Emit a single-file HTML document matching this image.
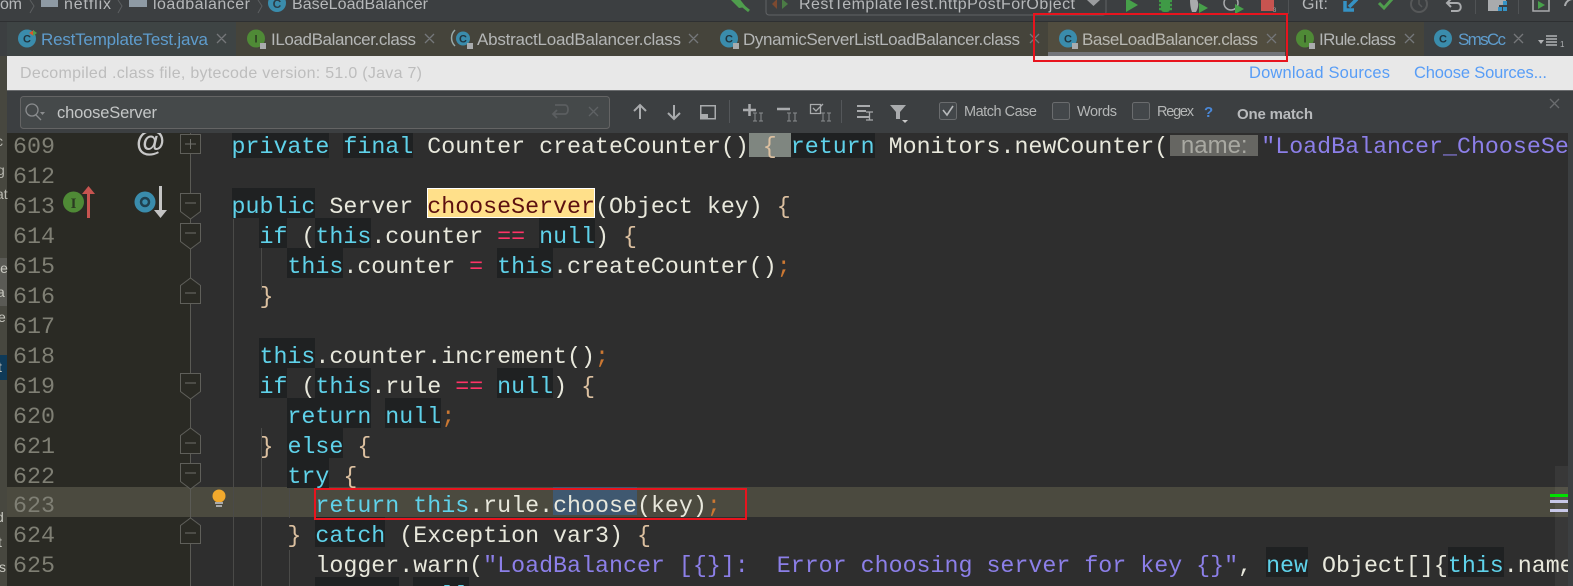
<!DOCTYPE html>
<html><head><meta charset="utf-8">
<style>
html,body{margin:0;padding:0;background:#3c3f41;width:1573px;height:586px;overflow:hidden}
#ed{position:absolute;left:0;top:133px;width:1568px;height:453px;overflow:hidden;background:#2e2e2e}
#gut{position:absolute;left:7px;top:0;width:183px;height:453px;background:#2a2a24}
.hl{position:absolute;left:7px;width:1561px;top:354px;height:30px;background:#4b4a3f}
.r{position:absolute;left:0;height:30px;white-space:pre;font:23.3px/38px "Liberation Mono",monospace;color:#e8e8dc}
.c{left:231.500px}
.n{left:13px;color:#7f7f74}
.k{color:#5fd2ea;background:#1f2122;display:inline-block;height:30px}
.p{color:#5fd2ea}
.o{color:#dcc0a0}
.s{color:#cc7832}
.e{color:#ff3366}
.t{color:#8c7fe8}
.f{background:#7f8680;color:#b9ad92;display:inline-block;height:29px}
.h{display:inline-block;width:88px;height:21px;margin:7px 3px 0 2px;vertical-align:top;background:#666662;color:#a9a9a2;font:24px/21px "Liberation Sans",sans-serif;text-align:center}
.m{background:#ffe08a;color:#5c1010;outline:1px solid #fff;outline-offset:-1px;display:inline-block;height:30px}
.u{background:#3f5870;display:inline-block;height:28px}
svg{position:absolute;left:0;top:0}
</style></head><body>
<div style="position:absolute;left:7px;top:22px;width:1566px;height:34px;background:#45443b"></div>
<div id="ed">
<div id="gut"></div>
<div class="hl"></div>
<div class="r n" style="top:-5px">609</div>
<div class="r n" style="top:25px">612</div>
<div class="r n" style="top:55px">613</div>
<div class="r n" style="top:85px">614</div>
<div class="r n" style="top:115px">615</div>
<div class="r n" style="top:145px">616</div>
<div class="r n" style="top:175px">617</div>
<div class="r n" style="top:205px">618</div>
<div class="r n" style="top:235px">619</div>
<div class="r n" style="top:265px">620</div>
<div class="r n" style="top:295px">621</div>
<div class="r n" style="top:325px">622</div>
<div class="r n" style="top:354px">623</div>
<div class="r n" style="top:384px">624</div>
<div class="r n" style="top:414px">625</div>

<div class="r c" style="top:-5px"><span class="k">private</span> <span class="k">final</span> Counter createCounter()<span class="f"> <span class="o">{</span> </span><span class="k">return</span> Monitors.newCounter(<span class="h">name:</span><span class="t">"LoadBalancer_ChooseServer</span></div>
<div class="r c" style="top:55px"><span class="k">public</span> Server <span class="m">chooseServer</span>(Object key) <span class="o">{</span></div>
<div class="r c" style="top:85px">  <span class="k">if</span> (<span class="k">this</span>.counter <span class="e">==</span> <span class="k">null</span>) <span class="o">{</span></div>
<div class="r c" style="top:115px">    <span class="k">this</span>.counter <span class="e">=</span> <span class="k">this</span>.createCounter()<span class="s">;</span></div>
<div class="r c" style="top:145px">  <span class="o">}</span></div>
<div class="r c" style="top:205px">  <span class="k">this</span>.counter.increment()<span class="s">;</span></div>
<div class="r c" style="top:235px">  <span class="k">if</span> (<span class="k">this</span>.rule <span class="e">==</span> <span class="k">null</span>) <span class="o">{</span></div>
<div class="r c" style="top:265px">    <span class="k">return</span> <span class="k">null</span><span class="s">;</span></div>
<div class="r c" style="top:295px">  <span class="o">}</span> <span class="k">else</span> <span class="o">{</span></div>
<div class="r c" style="top:325px">    <span class="k">try</span> <span class="o">{</span></div>
<div class="r c" style="top:354px">      <span class="p">return</span> <span class="p">this</span>.rule.<span class="u">choose</span>(key)<span class="s">;</span></div>
<div class="r c" style="top:384px">    <span class="o">}</span> <span class="k">catch</span> (Exception var3) <span class="o">{</span></div>
<div class="r c" style="top:414px">      logger.warn(<span class="t">"LoadBalancer [{}]:  Error choosing server for key {}"</span>, <span class="k">new</span> Object[]{<span class="k">this</span>.name</div>
<div class="r c" style="top:444px">      <span class="k">return</span> <span class="k">null</span></div>
</div>

<svg width="1573" height="586" viewBox="0 0 1573 586" font-family="Liberation Sans, sans-serif">
<!-- left strip -->
<rect x="0" y="56" width="7" height="530" fill="#47473f"/>
<rect x="0" y="258" width="7" height="48" fill="#5a5a55"/>
<rect x="0" y="355" width="7" height="25" fill="#0f3a58"/>
<text x="-4" y="146" font-size="14" fill="#b8b8b0">c</text>
<text x="-3" y="175" font-size="14" fill="#b8b8b0">g</text>
<text x="-4" y="199" font-size="14" fill="#b8b8b0">at</text>
<text x="-3" y="273" font-size="14" fill="#c8c8c0">le</text>
<text x="-3" y="297" font-size="14" fill="#c8c8c0">a</text>
<text x="-2" y="322" font-size="14" fill="#c8c8c0">e</text>
<text x="-2" y="372" font-size="14" fill="#c8c8c0">t</text>
<text x="-4" y="522" font-size="14" fill="#c8c8c0">d</text>
<text x="-2" y="547" font-size="14" fill="#c8c8c0">t</text>
<text x="-1" y="572" font-size="14" fill="#c8c8c0">s</text>

<!-- top bar -->
<rect x="0" y="0" width="1573" height="22" fill="#3c3f41"/>
<rect x="0" y="21" width="1573" height="1" fill="#2e3032"/>
<g font-size="16" fill="#b6b8ba">
<text x="0" y="9" textLength="22">om</text>
<text x="64" y="9" textLength="47">netflix</text>
<text x="153" y="9" textLength="97">loadbalancer</text>
<text x="292" y="9" textLength="136">BaseLoadBalancer</text>
</g>
<path d="M30 0l4 6-4 7M118 0l4 6-4 7M258 0l4 6-4 7" stroke="#5c5f61" fill="none"/>
<path d="M41 -2h17v9h-17zM129 -2h18v9h-18z" fill="#8e9aa4"/>
<circle cx="277" cy="3" r="9" fill="#3a8cac"/>
<text x="277" y="8" font-size="12" font-weight="bold" fill="#2b3e48" text-anchor="middle">C</text>
<!-- hammer -->
<path d="M729 -2l10 10 7-1-8-10z" fill="#4f9d4d"/><path d="M738 2l11 9" stroke="#4f9d4d" stroke-width="3"/>
<rect x="766" y="-6" width="340" height="21" rx="3" fill="none" stroke="#606365"/>
<path d="M777 -1l-5 5 5 5z" fill="#7d4a30"/><path d="M782 -1l6 5-6 5z" fill="#4b7b45"/>
<text x="799" y="9" font-size="16" fill="#b6b8ba" textLength="276">RestTemplateTest.httpPostForObject</text>
<path d="M1087 0h13l-6.500 6z" fill="#9a9c9e"/>
<path d="M1126 -2l12 7-12 7z" fill="#47a04a"/>
<path d="M1159 1h13M1159 5h13M1159 9h13" stroke="#3f9a46" stroke-width="2.500"/><rect x="1161" y="-2" width="9" height="14" rx="3" fill="#3f9a46"/>
<path d="M1190 -2h6c3 4 3 9 0 14h-4c-2-5-2-10-2-14z" fill="#a9abad"/><path d="M1199 3l9 5-9 5z" fill="#47a04a"/>
<circle cx="1231" cy="3" r="7" fill="none" stroke="#a9abad" stroke-width="1.500"/><path d="M1235 4l9 5-9 5z" fill="#47a04a"/><rect x="1238" y="13" width="9" height="2" fill="#d0d0d0"/>
<rect x="1261" y="-2" width="13" height="13" fill="#c75450"/><text x="1273" y="12" font-size="6" fill="#aaa">3</text>
<rect x="1288" y="0" width="1" height="14" fill="#505355"/>
<text x="1302" y="9" font-size="16" fill="#b6b8ba" textLength="26">Git:</text>
<path d="M1357 -1l-8 8M1345 1v9h9" stroke="#3592c4" stroke-width="3.500" fill="none"/>
<path d="M1379 3l5 5 9-10" stroke="#4f9d4d" stroke-width="3" fill="none"/>
<circle cx="1419" cy="4" r="8" fill="none" stroke="#565859" stroke-width="2"/><path d="M1419 0v4l3 3" stroke="#565859" fill="none" stroke-width="1.500"/>
<path d="M1448 3h9c5 0 5 8 0 8h-6M1451 -1l-4 4 4 4" stroke="#a9abad" stroke-width="2" fill="none"/>
<rect x="1475" y="0" width="1" height="14" fill="#505355"/>
<path d="M1488 -1h18v6h-7v6h-11z" fill="#a9abad"/><rect x="1498" y="7" width="4" height="4" fill="#3592c4"/><rect x="1503" y="7" width="4" height="4" fill="#3592c4"/><rect x="1503" y="1" width="4" height="4" fill="#3592c4"/>
<rect x="1518" y="0" width="1" height="14" fill="#505355"/>
<path d="M1533 -1v12h16v-12" fill="none" stroke="#a9abad" stroke-width="1.500"/><path d="M1538 1l7 4-7 4z" fill="#47a04a"/>
<path d="M1573 -1a8 8 0 0 0-8 7" stroke="#a9abad" stroke-width="2" fill="none"/>

<!-- tabs -->
<rect x="7" y="22" width="229" height="34" fill="#3e4444"/>
<rect x="1048" y="22" width="237" height="34" fill="#514d3f"/>
<rect x="1048" y="52" width="237" height="4" fill="#73757a"/>
<rect x="1424" y="22" width="149" height="34" fill="#3c4042"/>
<g font-size="17">
<text x="41" y="45" fill="#5e9ccd" textLength="167">RestTemplateTest.java</text>
<text x="271" y="45" fill="#b4b6b6" textLength="145">ILoadBalancer.class</text>
<text x="477" y="45" fill="#b4b6b6" textLength="204">AbstractLoadBalancer.class</text>
<text x="743" y="45" fill="#b4b6b6" textLength="277">DynamicServerListLoadBalancer.class</text>
<text x="1082" y="45" fill="#b8b8b2" textLength="176">BaseLoadBalancer.class</text>
<text x="1319" y="45" fill="#b4b6b6" textLength="77">IRule.class</text>
<text x="1458" y="45" fill="#5e9ccd" textLength="48">SmsCc</text>
</g>
<g stroke="#75777a" stroke-width="1.300">
<path d="M217 34l9 9m0-9l-9 9M425 34l9 9m0-9l-9 9M689 34l9 9m0-9l-9 9M1030 34l9 9m0-9l-9 9M1267 34l9 9m0-9l-9 9M1405 34l9 9m0-9l-9 9M1514 34l9 9m0-9l-9 9"/>
</g>
<!-- tab icons -->
<g font-weight="bold" text-anchor="middle" font-size="11">
<circle cx="27" cy="38.500" r="9" fill="#3a8cac"/><text x="27" y="42.500" fill="#20343e">C</text>
<path d="M29 33l5-3v6z" fill="#d9572b"/><path d="M33 30l4 3-4 3z" fill="#4f9d4d"/>
<circle cx="256" cy="38.500" r="9" fill="#4f8a36"/><text x="256" y="42.500" fill="#2b3a22">I</text><rect x="260" y="43" width="6" height="6" fill="#a9abad"/>
<circle cx="463" cy="38.500" r="7" fill="#3a8cac"/><path d="M455 30a11 11 0 0 0 0 16" fill="none" stroke="#9aa" stroke-width="1.500"/><text x="463" y="42.500" fill="#20343e">C</text><rect x="467" y="43" width="6" height="6" fill="#a9abad"/>
<circle cx="729" cy="38.500" r="9" fill="#3a8cac"/><text x="729" y="42.500" fill="#20343e">C</text><rect x="733" y="43" width="6" height="6" fill="#a9abad"/>
<circle cx="1068" cy="38.500" r="9" fill="#3a8cac"/><text x="1068" y="42.500" fill="#20343e">C</text><rect x="1072" y="43" width="6" height="6" fill="#a9abad"/>
<circle cx="1305" cy="38.500" r="9" fill="#4f8a36"/><text x="1305" y="42.500" fill="#2b3a22">I</text><rect x="1309" y="43" width="6" height="6" fill="#a9abad"/>
<circle cx="1443" cy="38.500" r="9" fill="#3a8cac"/><text x="1443" y="42.500" fill="#20343e">C</text>
</g>
<path d="M1538 40h6l-3 4z" fill="#b0b2b4"/><path d="M1546 36h11M1546 39h11M1546 42h11M1546 45h11" stroke="#b0b2b4" stroke-width="1.500"/>
<text x="1560" y="47" font-size="8" fill="#b0b2b4">1</text>

<!-- info bar -->
<rect x="7" y="56" width="1566" height="34" fill="#e8e8e8"/>
<text x="20" y="78" font-size="16" fill="#bdbdbd" textLength="402">Decompiled .class file, bytecode version: 51.0 (Java 7)</text>
<text x="1249" y="78" font-size="16.500" fill="#589df6" textLength="141">Download Sources</text>
<text x="1414" y="78" font-size="16.500" fill="#589df6" textLength="133">Choose Sources...</text>

<!-- @ under search bar so its top is clipped -->
<text x="150.500" y="151" font-size="30" font-weight="bold" fill="#c8c8c8" text-anchor="middle">@</text>

<!-- search bar -->
<rect x="7" y="90" width="1566" height="43" fill="#3c3f41"/>
<rect x="7" y="90" width="1566" height="1" fill="#6a6c6e"/>
<rect x="20.500" y="96.500" width="589" height="32" rx="3" fill="#45494a" stroke="#646464"/>
<circle cx="32" cy="110" r="6" fill="none" stroke="#8a8c8e" stroke-width="1.300"/><path d="M36 115l5 5" stroke="#8a8c8e" stroke-width="1.300"/><path d="M40 112h5l-2.500 3z" fill="#8a8c8e"/>
<text x="57" y="118" font-size="16.500" fill="#c4c6c6" textLength="100">chooseServer</text>
<path d="M555 105h10c4 0 4 9 0 9h-12M557 110l-4 4 4 4" stroke="#5b5e60" stroke-width="1.800" fill="none"/>
<path d="M589 107l9 9m0-9l-9 9" stroke="#5f6264" stroke-width="1.300"/>
<g stroke="#a9abad" stroke-width="2" fill="none">
<path d="M640 119v-13M634 111l6-6 6 6M674 105v13M668 113l6 6 6-6"/>
<rect x="700.750" y="105.750" width="14.500" height="13" stroke-width="1.500"/>
</g>
<rect x="700" y="114" width="8" height="5" fill="#a9abad"/>
<rect x="729" y="100" width="1" height="23" fill="#54575a"/>
<rect x="841" y="100" width="1" height="23" fill="#54575a"/>
<g stroke="#a9abad" fill="none">
<path d="M743 110h13M749.500 104v12" stroke-width="2.500"/>
<path d="M777 109h13" stroke-width="2.500"/>
<path d="M810.500 104.500h10v9h-10z" stroke-width="1.300"/><path d="M813 108l3 3 7-7" stroke-width="1.300"/>
<path d="M857 106h13M857 111h9M857 117h13" stroke-width="2"/>
<path d="M866 112h7M869.500 112v8M866 120h7" stroke-width="1.300"/>
<path d="M753 113h4M753 121h4M759 113h4M759 121h4M755 113v8M761 113v8" stroke-width="1" stroke="#8a8c8e"/>
<path d="M787 113h4M787 121h4M793 113h4M793 121h4M789 113v8M795 113v8" stroke-width="1" stroke="#8a8c8e"/>
<path d="M821 113h4M821 121h4M827 113h4M827 121h4M823 113v8M829 113v8" stroke-width="1" stroke="#8a8c8e"/>
</g>
<path d="M890 105h16l-6 7v7h-4v-7z" fill="#a9abad"/><path d="M902 120h6l-3 3z" fill="#c8c8c8"/>
<rect x="939.500" y="102.500" width="17" height="17" rx="2" fill="#43474a" stroke="#6a6c6e"/>
<path d="M943 110l4 5 6-9" stroke="#b8babc" stroke-width="1.600" fill="none"/>
<text x="964" y="116" font-size="14.500" fill="#b4b6b6" textLength="73">Match Case</text>
<rect x="1052.500" y="102.500" width="17" height="17" rx="2" fill="#43474a" stroke="#6a6c6e"/>
<text x="1077" y="116" font-size="14.500" fill="#b4b6b6" textLength="40">Words</text>
<rect x="1132.500" y="102.500" width="17" height="17" rx="2" fill="#43474a" stroke="#6a6c6e"/>
<text x="1157" y="116" font-size="14.500" fill="#b4b6b6" textLength="37">Regex</text>
<text x="1204" y="117" font-size="15" font-weight="bold" fill="#4a88d8">?</text>
<text x="1237" y="119" font-size="15" font-weight="bold" fill="#b8babc" textLength="76">One match</text>
<path d="M1550 99l9 9m0-9l-9 9" stroke="#6a6c6e" stroke-width="1.300"/>

<!-- editor decorations -->
<path d="M233.500 219V586M261.500 248V290M261.500 428V586M289.500 488V518M289.500 550V586" stroke="#4a4a48" stroke-width="1"/>
<path d="M190.500 133V586" stroke="#5a5a55"/>
<g fill="#2a2a24" stroke="#5f5f5a" stroke-width="1">
<rect x="180.500" y="134.500" width="20" height="19"/>
<path d="M180.500 193.500h20v18l-10 7.500-10-7.500z"/>
<path d="M180.500 223.500h20v18l-10 7.500-10-7.500z"/>
<path d="M180.500 303.500h20v-18l-10-7.500-10 7.500z"/>
<path d="M180.500 373.500h20v18l-10 7.500-10-7.500z"/>
<path d="M180.500 453.500h20v-18l-10-7.500-10 7.500z"/>
<path d="M180.500 463.500h20v18l-10 7.500-10-7.500z"/>
<path d="M180.500 543.500h20v-18l-10-7.500-10 7.500z"/>
</g>
<path d="M185 144h11M190.500 139v10M185 203h11M185 233h11M185 293h11M185 383h11M185 443h11M185 473h11M185 533h11" stroke="#6f6f6a" stroke-width="1"/>
<circle cx="73.500" cy="202" r="10.500" fill="#4f8a36"/><text x="73.500" y="208" font-size="15" font-weight="bold" fill="#2b3a22" text-anchor="middle" font-family="Liberation Serif">I</text>
<path d="M88.500 218V192" stroke="#c75450" stroke-width="3"/><path d="M82 194l6.500-8 6.500 8z" fill="#c75450"/>
<circle cx="145" cy="202" r="10.500" fill="#3a8cac"/><circle cx="145" cy="202" r="4" fill="none" stroke="#20404f" stroke-width="2.500"/>
<path d="M160.500 186V212" stroke="#c4c4c4" stroke-width="3"/><path d="M154 210l6.500 8 6.500-8z" fill="#c4c4c4"/>
<circle cx="219" cy="496" r="6.500" fill="#f2a92c"/><rect x="215" y="502" width="8" height="2" fill="#aaa"/><rect x="216" y="505" width="6" height="2" fill="#aaa"/>

<!-- scroll + markers -->
<rect x="1555" y="466" width="13" height="120" fill="#fff" opacity=".05"/>
<rect x="1568" y="133" width="5" height="453" fill="#3c3f41"/>
<rect x="1550" y="494" width="18" height="3" fill="#00e000"/>
<rect x="1550" y="500" width="18" height="3" fill="#c8c8e8"/>
<rect x="1550" y="509" width="18" height="3" fill="#c8c8e8"/>

<!-- red boxes -->
<rect x="1034" y="14" width="253" height="47" fill="none" stroke="#e8141e" stroke-width="2"/>
<rect x="315" y="489" width="431" height="30" fill="none" stroke="#e8141e" stroke-width="2"/>
</svg>
</body></html>
